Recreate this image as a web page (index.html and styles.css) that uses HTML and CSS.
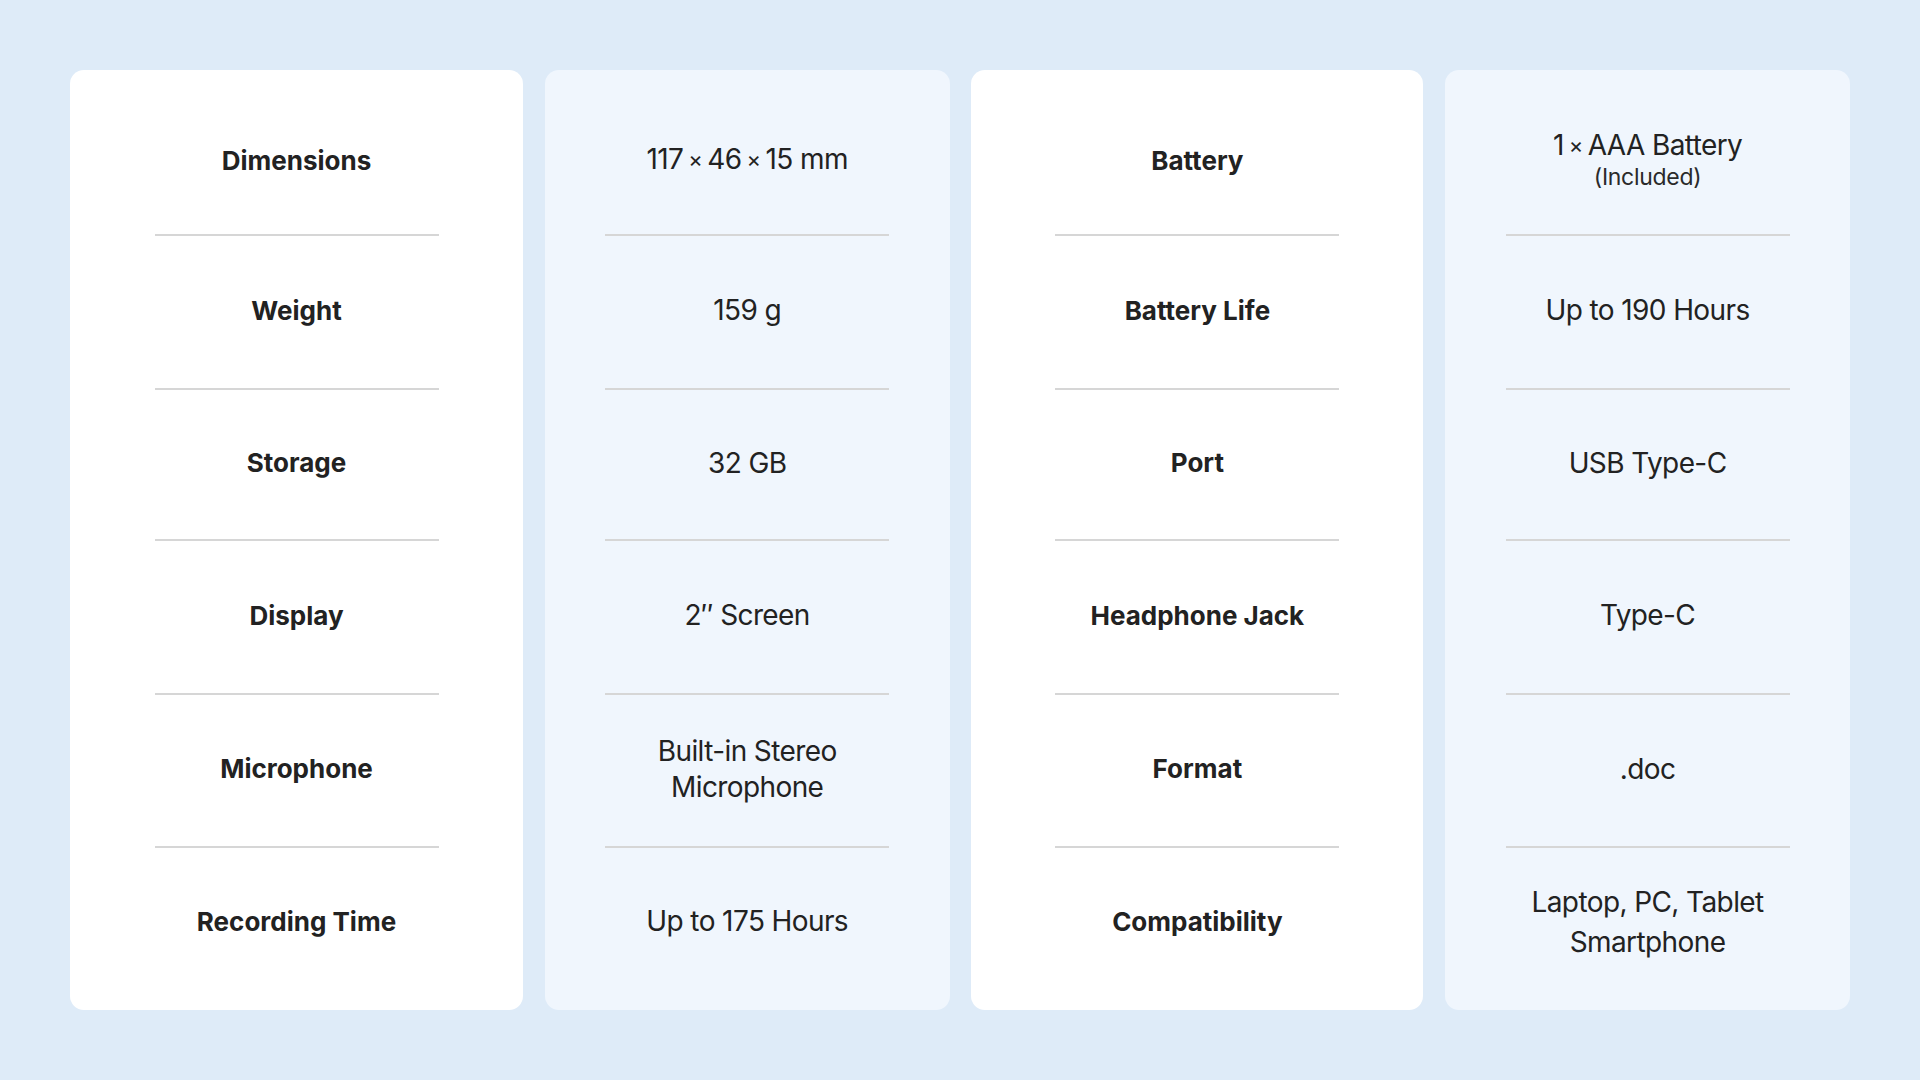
FILE: index.html
```html
<!DOCTYPE html>
<html lang="en">
<head>
<meta charset="utf-8">
<title>Specifications</title>
<link rel="stylesheet" href="styles.css">
</head>
<body>
<main class="specs">
  <section class="card card-labels">
    <div class="cell label">Dimensions</div><div class="rule"></div>
    <div class="cell label">Weight</div><div class="rule"></div>
    <div class="cell label">Storage</div><div class="rule"></div>
    <div class="cell label">Display</div><div class="rule"></div>
    <div class="cell label">Microphone</div><div class="rule"></div>
    <div class="cell label">Recording Time</div>
  </section>
  <section class="card card-values">
    <div class="cell value"><span class="line">117<span class="times">×</span>46<span class="times">×</span>15 mm</span></div><div class="rule"></div>
    <div class="cell value">159 g</div><div class="rule"></div>
    <div class="cell value">32 GB</div><div class="rule"></div>
    <div class="cell value">2″ Screen</div><div class="rule"></div>
    <div class="cell value"><span class="line">Built-in Stereo</span><span class="line">Microphone</span></div><div class="rule"></div>
    <div class="cell value">Up to 175 Hours</div>
  </section>
  <section class="card card-labels">
    <div class="cell label">Battery</div><div class="rule"></div>
    <div class="cell label">Battery Life</div><div class="rule"></div>
    <div class="cell label">Port</div><div class="rule"></div>
    <div class="cell label">Headphone Jack</div><div class="rule"></div>
    <div class="cell label">Format</div><div class="rule"></div>
    <div class="cell label">Compatibility</div>
  </section>
  <section class="card card-values">
    <div class="cell value stack"><span class="line">1<span class="times">×</span>AAA Battery</span><span class="note">(Included)</span></div><div class="rule"></div>
    <div class="cell value">Up to 190 Hours</div><div class="rule"></div>
    <div class="cell value">USB Type-C</div><div class="rule"></div>
    <div class="cell value">Type-C</div><div class="rule"></div>
    <div class="cell value">.doc</div><div class="rule"></div>
    <div class="cell value tall"><span class="line">Laptop, PC, Tablet</span><span class="line">Smartphone</span></div>
  </section>
</main>
</body>
</html>
```
FILE: styles.css
```css
* { box-sizing: border-box; }
html, body {
  margin: 0;
  padding: 0;
  width: 1920px;
  height: 1080px;
  background: #deebf8;
  font-family: Inter, "Noto Sans", sans-serif;
  color: #222222;
}
.specs {
  display: grid;
  grid-template-columns: 453px 405px 452px 405px;
  column-gap: 21.7px;
  padding: 70px 70px 0 70px;
}
.card {
  height: 940px;
  border-radius: 14px;
  padding: 20px 0 12px;
  display: grid;
  grid-template-rows: 144px 2px 152px 2px 149px 2px 152px 2px 151px 2px 150px;
  justify-items: center;
}
.card-labels { background: #ffffff; }
.card-values { background: #f0f6fd; }
.cell {
  width: 100%;
  display: flex;
  flex-direction: column;
  align-items: center;
  justify-content: center;
  text-align: center;
  padding-bottom: 4px;
}
.line { display: block; white-space: nowrap; }
.label {
  font-size: 26px;
  font-weight: 700;
  letter-spacing: 0;
}
.value {
  font-size: 28px;
  font-weight: 400;
  line-height: 36px;
  letter-spacing: -0.6px;
}
.times {
  font-size: 22px;
  margin: 0 5px;
  position: relative;
  top: -2px;
}
.stack { line-height: 32px; }
.tall { line-height: 40px; padding-bottom: 2px; }
.note {
  display: block;
  font-size: 23px;
  line-height: 28px;
  letter-spacing: -0.3px;
  color: #2a2a2a;
}
.rule {
  width: 284px;
  height: 2px;
  background: #d6d6d6;
}
```
